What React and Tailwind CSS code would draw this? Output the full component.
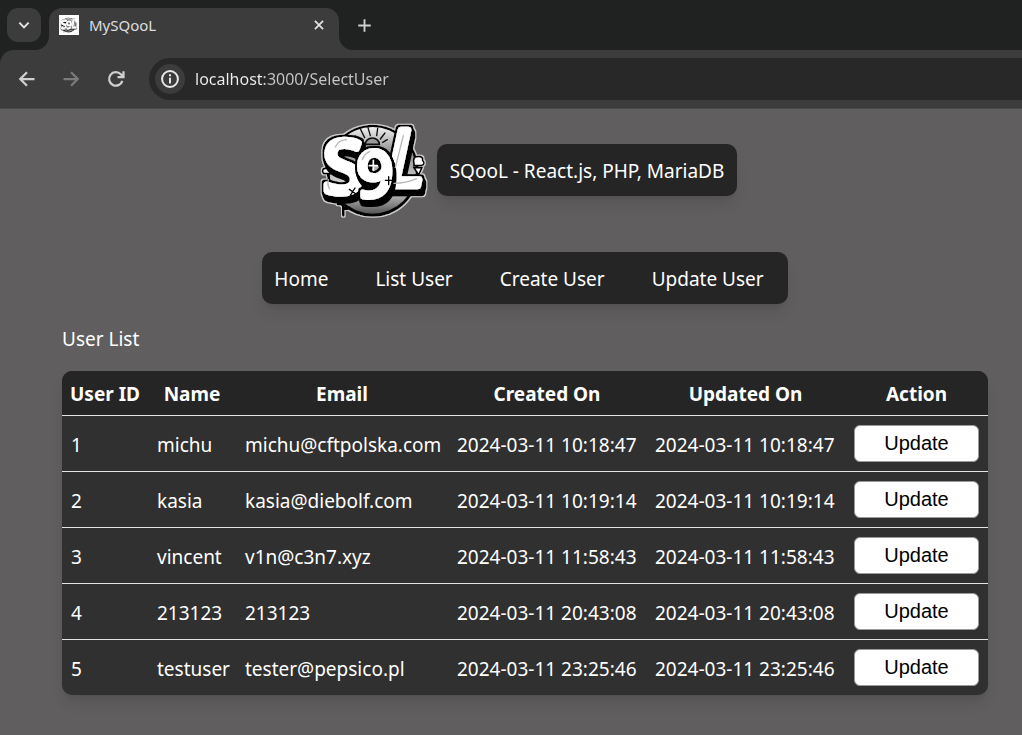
const users = [
  { id: 1, name: "michu", email: "michu@cftpolska.com", created: "2024-03-11 10:18:47", updated: "2024-03-11 10:18:47" },
  { id: 2, name: "kasia", email: "kasia@diebolf.com", created: "2024-03-11 10:19:14", updated: "2024-03-11 10:19:14" },
  { id: 3, name: "vincent", email: "v1n@c3n7.xyz", created: "2024-03-11 11:58:43", updated: "2024-03-11 11:58:43" },
  { id: 4, name: "213123", email: "213123", created: "2024-03-11 20:43:08", updated: "2024-03-11 20:43:08" },
  { id: 5, name: "testuser", email: "tester@pepsico.pl", created: "2024-03-11 23:25:46", updated: "2024-03-11 23:25:46" },
];

const links = ["Home", "List User", "Create User", "Update User"];

function Logo({ className, id }) {
  const ink = `url(#${id}-ink)`;
  return (
    <svg viewBox="9 0 372 330" className={className} role="img" aria-label="SQL logo">
      <defs>
        <linearGradient id={`${id}-disc`} x1="0" y1="0" x2="0" y2="1">
          <stop offset="0" stopColor="#f0f0f0" />
          <stop offset="0.3" stopColor="#8c8c8c" />
          <stop offset="0.7" stopColor="#dddddd" />
          <stop offset="1" stopColor="#555555" />
        </linearGradient>
        {/* black contour with an extruded side, per letter */}
        <filter id={`${id}-ink`} x="-30%" y="-30%" width="160%" height="160%">
          <feMorphology in="SourceAlpha" operator="dilate" radius="6" result="fat" />
          <feOffset in="fat" dx="3" dy="8" result="side" />
          <feOffset in="fat" dx="5" dy="14" result="deep" />
          <feFlood floodColor="#050505" result="black" />
          <feComposite in="black" in2="fat" operator="in" result="a" />
          <feComposite in="black" in2="side" operator="in" result="b" />
          <feComposite in="black" in2="deep" operator="in" result="c" />
          <feMerge>
            <feMergeNode in="c" />
            <feMergeNode in="b" />
            <feMergeNode in="a" />
            <feMergeNode in="SourceGraphic" />
          </feMerge>
        </filter>
        {/* pale rim round the whole badge */}
        <filter id={`${id}-rim`} x="-10%" y="-10%" width="120%" height="120%">
          <feMorphology in="SourceAlpha" operator="dilate" radius="4" result="fat" />
          <feFlood floodColor="#cfcfcf" />
          <feComposite in2="fat" operator="in" result="rim" />
          <feMerge>
            <feMergeNode in="rim" />
            <feMergeNode in="SourceGraphic" />
          </feMerge>
        </filter>
      </defs>
      <g filter={`url(#${id}-rim)`}>
        <circle cx="188" cy="167" r="138" fill="#050505" />
        <circle cx="188" cy="166" r="130" fill={`url(#${id}-disc)`} />
        <path d="M166 88 a20 18 0 0 1 42 0z" fill="#999" stroke="#111" strokeWidth="5" />
        <path d="M152 44l12 24 M174 38l7 24 M203 40l-3 22 M225 54l-14 18 M232 74l-14 8 M137 63l16 14 M140 84l16 2" stroke="#111" strokeWidth="4" strokeLinecap="round" />
        <path d="M38 170q-2-10 8-10q8-10 16 2v14H42q-4-2-4-6z M312 146q-6-22 14-22q14 0 12 12q10 12-4 16h-22z" fill="#fff" stroke="#050505" strokeWidth="5" />
        <path d="M312 158h24l-10 22z" fill="#fff" stroke="#050505" strokeWidth="5" />
        <path d="M84 267q14-2 16 8v26 M100 276q10 10 18 2" fill="none" stroke="#050505" strokeWidth="8" strokeLinecap="round" />
        <g fill="#fff" stroke="#fff" strokeLinejoin="round" fontFamily="Noto Sans, sans-serif">
          <text x="40" y="233" fontSize="218" strokeWidth="20" filter={ink}>S</text>
          <text x="227" y="212" fontSize="238" strokeWidth="20" fontStyle="italic" filter={ink}>L</text>
          <text x="139" y="247" fontSize="194" strokeWidth="15" filter={ink}>9</text>
        </g>
        <path d="M76 96q10-22 34-22 M55 194q-4 16 4 28 M157 134q6-18 22-24 M280 62l-24 96 M252 205q36 0 68-14" fill="none" stroke="#b8b8b8" strokeWidth="4" strokeLinecap="round" />
        <path d="M118 223l20 14 M135 219l-14 22 M226 196h20 M236 185v24" stroke="#050505" strokeWidth="4" strokeLinecap="round" />
        <path d="M178 152h24 M190 136v30" stroke="#fff" strokeWidth="5" strokeLinecap="round" />
      </g>
    </svg>
  );
}

function Icon({ d, size, width = 2 }) {
  return (
    <svg viewBox="0 0 24 24" width={size} height={size} fill="none" stroke="currentColor" strokeWidth={width} aria-hidden="true">
      <path d={d} />
    </svg>
  );
}

function Browser() {
  return (
    <header className="bg-[#3c3c3c]">
      <div className="flex h-[50px]">
        <div className="flex w-[49px] shrink-0 rounded-br-[14px] bg-[#1f2221] pt-2 pl-[7px]">
          <button aria-label="Search tabs" className="flex size-[34px] items-center justify-center rounded-[11px] bg-[#3c3c3c] text-[#e3e3e3]">
            <Icon d="M5 8.500l7 7 7-7" size={16} width={3} />
          </button>
        </div>
        <div className="w-[290px] shrink-0 bg-[#1f2221] pt-2">
          <div className="flex h-full items-center rounded-t-[13px] bg-[#3c3c3c] pr-3 pb-2 pl-2.5">
            <span className="size-5 shrink-0 bg-white">
              <Logo className="h-5 w-5" id="disc-small" />
            </span>
            <span className="ml-2.5 flex-1 text-[15px] text-[#dedede]">MySQooL</span>
            <button aria-label="Close tab" className="p-px text-[#e3e3e3]">
              <Icon d="M5 5l14 14M19 5L5 19" size={14} width={3} />
            </button>
          </div>
        </div>
        <div className="flex flex-1 rounded-bl-[14px] bg-[#1f2221] pl-[18px]">
          <button aria-label="New tab" className="text-[#d0d0d0]">
            <Icon d="M12 2v20M2 12h20" size={15} width={3} />
          </button>
        </div>
      </div>
      <div className="bg-[#1f2221]">
        <div className="flex h-[59px] items-center rounded-tl-[14px] border-b border-[#4a4a4a] bg-[#3c3c3c] pl-[18px] text-[#cfcfcf]">
          <button aria-label="Back">
            <Icon d="M22 12H4M12 3l-9 9 9 9" size={18} width={3} />
          </button>
          <button aria-label="Forward" className="ml-[26px] text-[#7b7b7b]">
            <Icon d="M2 12h18M12 3l9 9-9 9" size={18} width={3} />
          </button>
          <button aria-label="Reload" className="ml-[27px]">
            <Icon d="M20.500 14.500A9 9 0 1 1 18.500 5.800L21.500 9M22 1.500V9.500H14" size={18} width={3} />
          </button>
          <div className="ml-6 flex h-[42px] flex-1 items-center rounded-l-full bg-[#282828] pl-1.5">
            <button aria-label="Site information" className="flex size-[30px] shrink-0 items-center justify-center rounded-full bg-[#3c3c3c] text-[#e8e8e8]">
              <Icon d="M12 2.500a9.500 9.500 0 1 0 0 19a9.500 9.500 0 1 0 0-19M12 10.500v7M12 6.200v2.600" size={20} width={2.4} />
            </button>
            <input
              aria-label="Address"
              defaultValue="localhost:3000/SelectUser"
              className="ml-2.5 min-w-0 flex-1 bg-[linear-gradient(to_right,#f0f0f0_69px,#c7c7c7_69px)] bg-clip-text text-base text-transparent outline-none"
            />
          </div>
        </div>
      </div>
    </header>
  );
}

export default function App() {
  return (
    <div className="flex min-h-screen flex-col bg-[#605e5f] font-['Noto_Sans',sans-serif] text-[19px] leading-7 text-white">
      <Browser />
      <main className="flex-1 pt-1.5 pr-[34px] pb-10 pl-[62px]">
        <div className="flex items-center justify-center">
          <Logo className="h-[110px] w-[124px]" id="disc-large" />
          <h1 className="rounded-[10px] bg-[#252525] px-[13px] pt-[13px] pb-[11px] shadow-lg">SQooL - React.js, PHP, MariaDB</h1>
        </div>
        <nav className="mt-[27px] flex justify-center">
          <div className="flex gap-[47px] rounded-[10px] bg-[#252525] pt-[13px] pr-6 pb-[11px] pl-3 shadow-lg">
            {links.map((l) => (
              <a key={l} href={`#${l}`}>{l}</a>
            ))}
          </div>
        </nav>
        <h2 className="mt-[21px]">User List</h2>
        <div className="mt-[18px] overflow-hidden rounded-[10px] bg-[#303030] shadow-lg">
          <table className="w-full table-fixed border-collapse">
            <colgroup>
              <col className="w-[86px]" />
              <col className="w-[88px]" />
              <col className="w-[212px]" />
              <col className="w-[198px]" />
              <col className="w-[199px]" />
              <col className="w-[143px]" />
            </colgroup>
            <thead className="bg-[#252525]">
              <tr className="h-11">
                {["User ID", "Name", "Email", "Created On", "Updated On", "Action"].map((h) => (
                  <th key={h} className="pt-0.5 font-bold whitespace-nowrap">{h}</th>
                ))}
              </tr>
            </thead>
            <tbody>
              {users.map((u) => (
                <tr key={u.id} className="h-14 border-t border-[#e4e4e4]">
                  {[u.id, u.name, u.email, u.created, u.updated].map((v, i) => (
                    <td key={i} className="px-[9px] pt-1 whitespace-nowrap">{v}</td>
                  ))}
                  <td className="px-[9px]">
                    <button className="block h-[37px] w-full rounded-md border border-[#9a9a9a] bg-white font-['Liberation_Sans',sans-serif] text-xl text-black">Update</button>
                  </td>
                </tr>
              ))}
            </tbody>
          </table>
        </div>
      </main>
    </div>
  );
}
